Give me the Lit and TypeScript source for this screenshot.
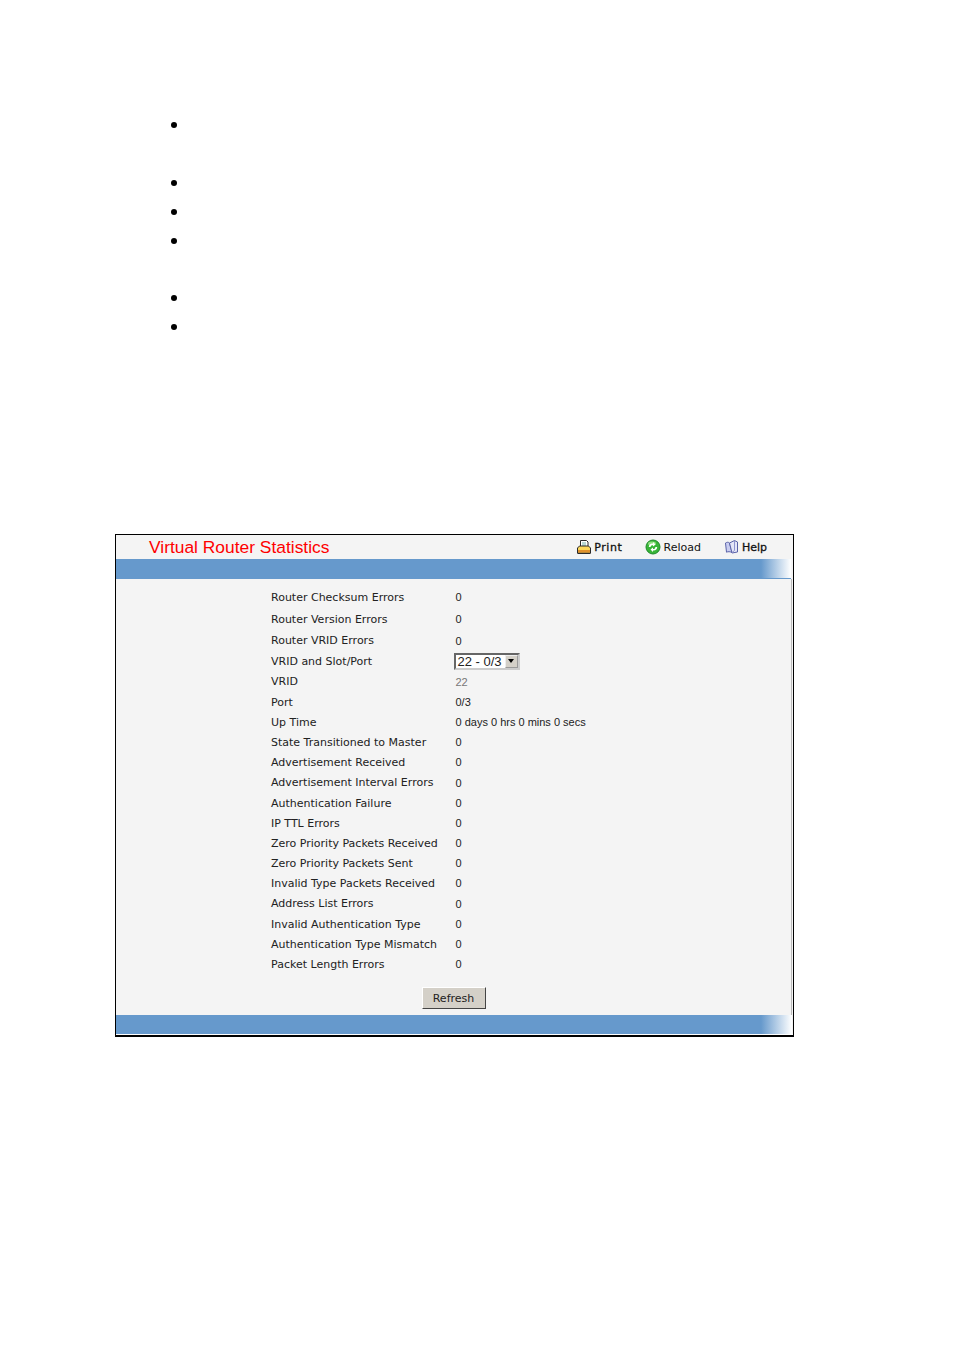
import { LitElement, html, css, svg } from "lit";
import { customElement } from "lit/decorators.js";

const ROWS: [string, string, number][] = [
  ["Router Checksum Errors", "0", 22],
  ["Router Version Errors", "0", 22],
  ["Router VRID Errors", "0", 21],
  ["VRID and Slot/Port", "", 20],
  ["VRID", "22", 21],
  ["Port", "0/3", 20],
  ["Up Time", "0 days 0 hrs 0 mins 0 secs", 20],
  ["State Transitioned to Master", "0", 20],
  ["Advertisement Received", "0", 20],
  ["Advertisement Interval Errors", "0", 21],
  ["Authentication Failure", "0", 20],
  ["IP TTL Errors", "0", 20],
  ["Zero Priority Packets Received", "0", 20],
  ["Zero Priority Packets Sent", "0", 20],
  ["Invalid Type Packets Received", "0", 20],
  ["Address List Errors", "0", 21],
  ["Invalid Authentication Type", "0", 20],
  ["Authentication Type Mismatch", "0", 20],
  ["Packet Length Errors", "0", 20],
];

const printIcon = svg`<svg width="16" height="16" viewBox="0 0 16 16"><path d="M4.500 1.500h6l1.500 1.500v5H4.500z" fill="#fff" stroke="#2a2a2a"/><path d="M6 4h4M6 6h4" stroke="#6fb0a8"/><path d="M1.500 9l2-2h9l2 2v5h-13z" fill="#fbd75a" stroke="#2a2a2a"/><rect x="2" y="11" width="12" height="2.500" fill="#e0902a"/><path d="M1.500 14.500h13" stroke="#2a2a2a"/></svg>`;
const reloadIcon = svg`<svg width="16" height="16" viewBox="0 0 16 16"><circle cx="8" cy="8" r="7" fill="#37b437" stroke="#1f8a2a"/><ellipse cx="7" cy="4.500" rx="4" ry="2" fill="#8fe07f"/><path d="M3.800 8c0-2.500 2-3.900 4.200-3.500V3l2.500 2.400L8 7.600V6c-1.300-.2-2.400.6-2.400 2z" fill="#fff"/><path d="M12.200 8c0 2.500-2 3.900-4.200 3.500V13l-2.500-2.400L8 8.400V10c1.300.2 2.400-.6 2.400-2z" fill="#fff"/></svg>`;
const helpIcon = svg`<svg width="16" height="16" viewBox="0 0 16 16"><path d="M1.500 4c1.500-1 3-1 4 0l2.500 9.500c-2-1-4-1-5.500-.3z" fill="#c9cdf0" stroke="#5a62a8"/><path d="M5.500 4l5-2.500 3 1.500v10l-5.500 1z" fill="#e4e6f8" stroke="#5a62a8"/><path d="M10.500 2v9.500L8 13.500" fill="none" stroke="#8f95cf"/></svg>`;

@customElement("app-root")
export class AppRoot extends LitElement {
  static styles = css`
    :host { display: block; width: 954px; height: 1350px; background: #fff; font-family: "DejaVu Sans", sans-serif; color: #222; overflow: hidden; }
    .bullets { margin: 0; padding: 117px 0 0 171px; list-style: none; height: 534px; box-sizing: border-box; }
    .bullets li { height: 29px; display: flex; align-items: flex-start; padding-top: 5px; box-sizing: border-box; }
    .bullets li.tall { height: 58px; }
    .bullets li.tall2 { height: 57px; }
    .bullets li::before { content: ""; width: 6px; height: 6px; border-radius: 50%; background: #000; }
    .panel { margin-left: 115px; width: 679px; height: 503px; box-sizing: border-box; border: 1px solid #000; border-bottom-width: 2px; background: #f4f4f4; display: flex; flex-direction: column; }
    .head { height: 24px; display: flex; align-items: center; padding-left: 33px; }
    .title { font: 17.400px "Liberation Sans", sans-serif; color: #f00; flex: 1; }
    .tools { display: flex; align-items: center; padding-right: 26px; font-size: 11px; color: #111; }
    .tool { display: flex; align-items: center; gap: 2px; margin-left: 23px; }
    .tool svg { display: block; }
    .strong { -webkit-text-stroke: 0.3px #111; letter-spacing: 0.6px; }
    .help { -webkit-text-stroke: 0.3px #111; }
    .bar { height: 19px; margin-right: 2px; background: linear-gradient(90deg, #6699cc 0, #6699cc 645px, #ffffff 100%); }
    .top-bar { border-bottom: 1px solid #6699cc; }
    .body { flex: 1; margin-right: 1px; border-right: 1px solid #bbb; padding: 7px 0 0 155px; display: flex; flex-direction: column; }
    .row { display: flex; align-items: center; font-size: 11px; }
    .label { width: 184.500px; }
    .value { font: 11px "Liberation Sans", sans-serif; }
    .muted { color: #777; }
    .select { display: flex; align-items: center; width: 66px; height: 17px; margin-left: -2px; box-sizing: border-box; border: 2px solid; border-color: #666 #ccc #ccc #666; background: #fff; padding-left: 2px; font: 13px "Liberation Sans", sans-serif; justify-content: space-between; }
    .arrow { width: 13px; height: 13px; box-sizing: border-box; background: #d4d0c8; border: 1px outset #eee; display: flex; align-items: center; justify-content: center; }
    .arrow::after { content: ""; border: 3.500px solid transparent; border-top: 4px solid #000; border-bottom: 0; }
    .actions { display: flex; justify-content: center; padding-top: 13px; margin-left: -155px; }
    button { width: 64px; height: 22px; font: 11px "DejaVu Sans", sans-serif; color: #222; background: #d4d0c8; border: 1px solid; border-color: #fff #444 #444 #fff; padding: 0; }
    .bottom { height: 19px; margin-right: 1px; flex: none; }
    .edge { height: 1px; background: #fff; flex: none; }
  `;

  render() {
    return html`
      <ul class="bullets">
        <li class="tall"></li><li></li><li></li><li class="tall2"></li><li></li><li></li>
      </ul>
      <section class="panel">
        <div class="head">
          <div class="title">Virtual Router Statistics</div>
          <div class="tools">
            <div class="tool">${printIcon}<span class="strong">Print</span></div>
            <div class="tool">${reloadIcon}<span>Reload</span></div>
            <div class="tool">${helpIcon}<span class="help">Help</span></div>
          </div>
        </div>
        <div class="bar top-bar"></div>
        <div class="body">
          ${ROWS.map(([l, v, h]) => html`
            <div class="row" style="height:${h}px">
              <div class="label">${l}</div>
              ${l === "VRID and Slot/Port"
                ? html`<div class="select"><span>22 - 0/3</span><span class="arrow"></span></div>`
                : html`<div class="value ${l === "VRID" ? "muted" : ""}">${v}</div>`}
            </div>`)}
          <div class="actions"><button>Refresh</button></div>
        </div>
        <div class="bar bottom"></div>
        <div class="edge"></div>
      </section>
    `;
  }
}
